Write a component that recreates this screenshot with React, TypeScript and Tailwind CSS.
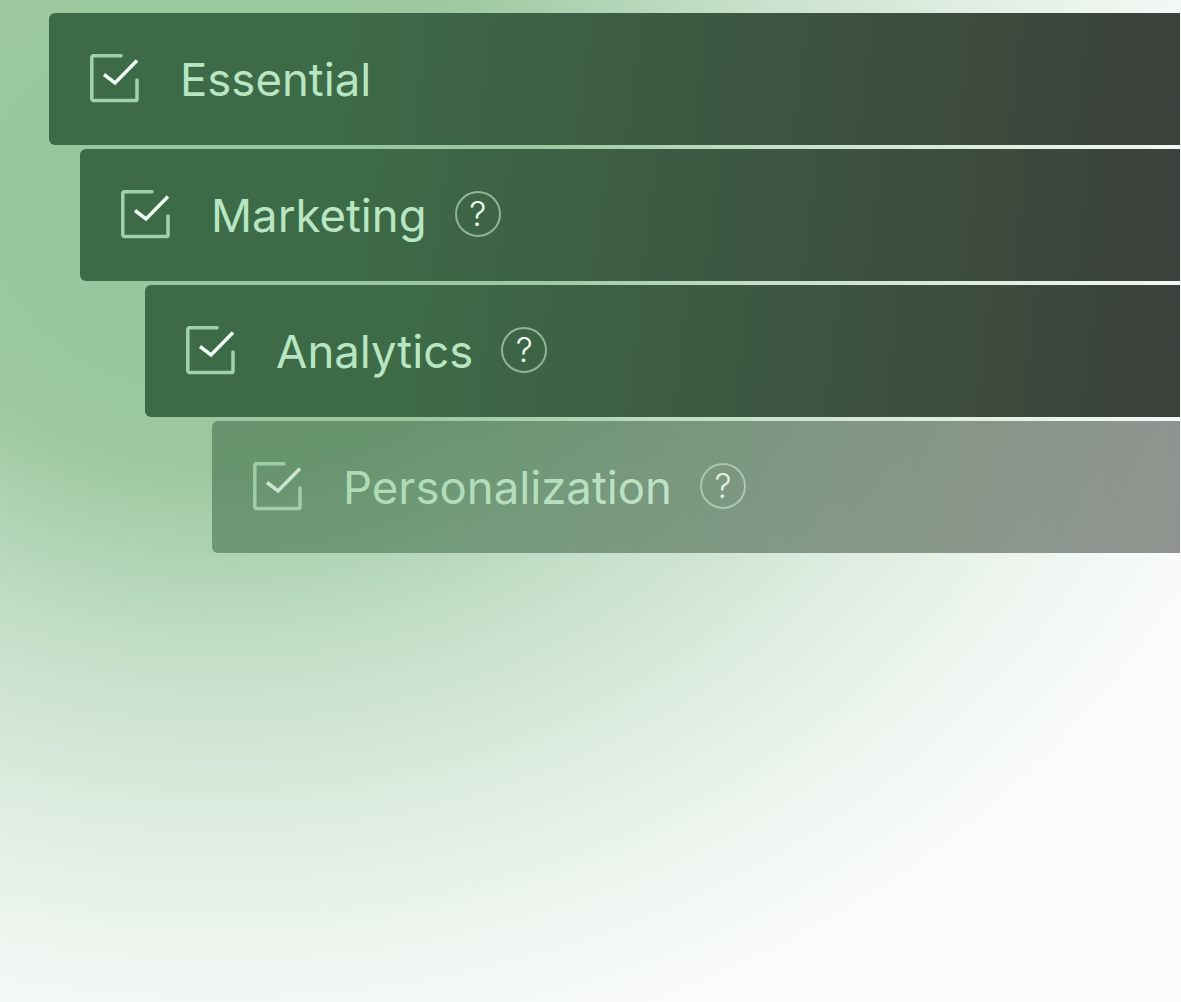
const ROWS = [
  { name: "Essential", indent: "ml-[49px]", help: false, faded: false },
  { name: "Marketing", indent: "ml-[80px]", help: true, faded: false },
  { name: "Analytics", indent: "ml-[145px]", help: true, faded: false },
  { name: "Personalization", indent: "ml-[212px]", help: true, faded: true },
];

function CheckIcon() {
  return (
    <svg width="50" height="50" viewBox="0 0 50 50" fill="none" className="shrink-0">
      <path
        d="M31 1.800H3.500a1.700 1.700 0 0 0-1.700 1.700V44.800a1.700 1.700 0 0 0 1.700 1.700H45.500a1.500 1.500 0 0 0 1.500-1.500V26"
        stroke="#9fd3a9"
        strokeWidth="3.500"
        strokeLinecap="round"
      />
      <path d="M14 20.500l11 8.500L47 6.500" stroke="#f0fbf2" strokeWidth="3.500" />
    </svg>
  );
}

function Row({ name, indent, help, faded }: (typeof ROWS)[number]) {
  return (
    <div
      className={`${indent} mr-px h-[132px] flex items-center pl-[41px] rounded-l-md bg-[linear-gradient(97deg,#3d6b47_25%,#3c403b_100%)] ${
        faded ? "opacity-55" : ""
      }`}
    >
      <CheckIcon />
      <span className="ml-[40px] mt-[2px] text-[45.5px] font-normal leading-none text-[#b8e6c2]">{name}</span>
      {help && (
        <span className="ml-[28px] mb-[2px] w-[46px] h-[46px] rounded-full border-2 border-[#8fb497] flex items-center justify-center text-[34px] font-light leading-none text-[#f0faf1]">
          ?
        </span>
      )}
    </div>
  );
}

export default function App() {
  return (
    <div
      className="w-[1181px] h-[1002px] overflow-hidden pt-[13px] flex flex-col gap-1 bg-[radial-gradient(ellipse_1100px_900px_at_220px_200px,#94c59b_0%,#9cc9a0_30%,#c3dec7_50%,#dcebdf_68%,#eef5ef_84%,#fbfdfb_100%)]"
      style={{ fontFamily: "Inter, sans-serif" }}
    >
      {ROWS.map((r) => (
        <Row key={r.name} {...r} />
      ))}
    </div>
  );
}
